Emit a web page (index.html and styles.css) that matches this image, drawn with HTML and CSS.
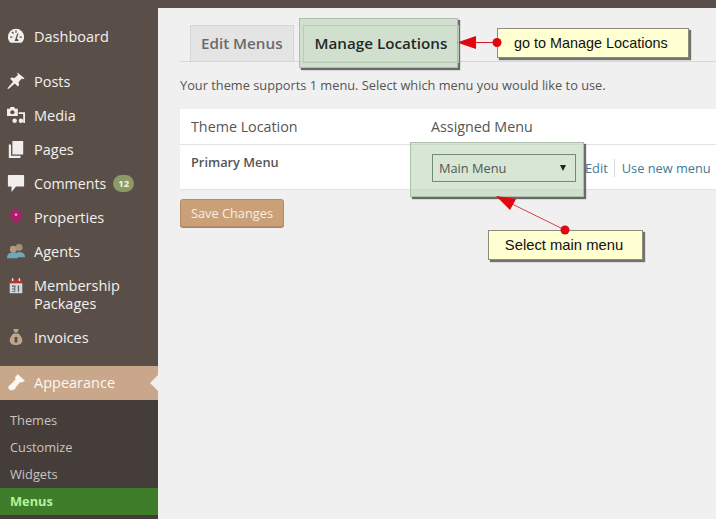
FILE: index.html
```html
<!DOCTYPE html>
<html lang="en">
<head>
  <meta charset="UTF-8">
  <title>Menus</title>
  <link rel="stylesheet" href="styles.css">
</head>
<body>
  <div class="page">
    <div class="sidebar">
      <ul class="menu">
        <li class="item item-dashboard">
          <svg class="icon" viewBox="0 0 20 20"><path fill="#f1eeee" d="M10 2a9 9 0 0 0-9 9c0 2.800 1.200 5 3 6.500h12c1.800-1.500 3-3.700 3-6.500a9 9 0 0 0-9-9z"/><path fill="#594f48" d="M9.300 4h1.400v2.500H9.300zM3.500 10.500H6v1.400H3.500zM14 10.500h2.500v1.400H14zM5 6l1-1 1.800 1.800-1 1zM13 15.500H8.500l3-8.500 1.300.5-1.800 5.200c1 .5 1.700 1.500 2 2.800z"/></svg>
          <span>Dashboard</span>
        </li>
        <li class="item item-posts">
          <svg class="icon" viewBox="0 0 20 20"><path fill="#f1eeee" d="M11.500 0.500l8 6.500-2 1-1-.8-3.600 3.800.6 3.500-1.500 1.500-3.300-3.200-6.700 5.700-1.500.5.500-1.500 5.700-6.700-3.200-3.300 1.500-1.500 3.500.6 3.800-3.600-.8-1z"/></svg>
          <span>Posts</span>
        </li>
        <li class="item">
          <svg class="icon" viewBox="0 0 20 20"><path fill="#f1eeee" d="M0 3h3l1-2h4l1 2h3v8H0zM13 7h7v12h-2V9h-5z"/><circle cx="6" cy="7" r="2.300" fill="#594f48"/><circle cx="8.500" cy="16.500" r="2.500" fill="#f1eeee"/><circle cx="15.500" cy="16.500" r="2.500" fill="#f1eeee"/></svg>
          <span>Media</span>
        </li>
        <li class="item">
          <svg class="icon" viewBox="0 0 20 20"><path fill="#f1eeee" d="M6 1h12v15H6zM2 5h2.500v12.500H15V20H2z"/></svg>
          <span>Pages</span>
        </li>
        <li class="item">
          <svg class="icon" viewBox="0 0 20 20"><path fill="#f1eeee" d="M2 1h16a1 1 0 0 1 1 1v11a1 1 0 0 1-1 1H10l-5 6v-6H2a1 1 0 0 1-1-1V2a1 1 0 0 1 1-1z"/></svg>
          <span class="label-comments">Comments</span>
          <span class="badge">12</span>
        </li>
        <li class="item">
          <svg class="icon" viewBox="0 0 20 20"><path fill="#a81f6b" d="M10 1a6.500 6.500 0 0 1 6.500 6.500C16.500 12 10 18 10 18S3.500 12 3.500 7.500A6.500 6.500 0 0 1 10 1z"/><circle cx="10" cy="7.500" r="1.500" fill="#f09ac8"/></svg>
          <span>Properties</span>
        </li>
        <li class="item">
          <svg class="icon" viewBox="0 0 20 20"><circle cx="7" cy="8" r="3.800" fill="#b59a80"/><circle cx="13.500" cy="6" r="3.800" fill="#a88f78"/><path fill="#6fa8b8" d="M0 18c0-4.500 2.500-6.500 7-6.500 1.300 0 2.500.2 3.300.7.900-.7 2.200-1 3.500-1 3.800 0 6.200 1.800 6.200 5.800h-8v1z"/></svg>
          <span>Agents</span>
        </li>
        <li class="item item-tall">
          <svg class="icon" viewBox="0 0 20 20"><path fill="#b3362f" d="M3 3h14v4H3z"/><path fill="#d7d7d3" d="M3 7h14v11H3z"/><path fill="#4e6a78" d="M5.500 9.500h4v1.200h-4zM8 10.700h1.200v5.800H8zM5.500 12.800h3v1h-3zM5.500 15.500h3v1h-3zM12 9.500h1.500v7H12z"/><path fill="#eee" d="M5.500 1.500h1.500v3H5.500zM13 1.500h1.500v3H13z"/></svg>
          <span>Membership<br>Packages</span>
        </li>
        <li class="item">
          <svg class="icon" viewBox="0 0 20 20"><path fill="#bba68e" d="M7 1h6l-1.500 4.500c3 1.500 5.500 5 5.500 8.500 0 3-2.500 5-7 5s-7-2-7-5c0-3.500 2.500-7 5.500-8.500z"/><path fill="#574a3e" d="M8 5h4v1H8zM8.500 10h3v6h-3z"/></svg>
          <span>Invoices</span>
        </li>
        <li class="item item-current">
          <svg class="icon" viewBox="0 0 20 20"><path fill="#fbf7f2" d="M12 1.500l8 7-3.500 2-1.500-.5-5 5.500c-.5 3-4.500 4.500-7 3s-1.500-5 1.500-6L9.500 7 9 4.500z"/></svg>
          <span>Appearance</span>
        </li>
      </ul>
      <ul class="submenu">
        <li>Themes</li>
        <li>Customize</li>
        <li>Widgets</li>
        <li class="sub-active">Menus</li>
      </ul>
    </div>

    <div class="main">
      <div class="topbar"></div>
      <div class="wrap">
        <div class="tabs">
          <div class="tab">Edit Menus</div>
          <div class="tab tab-active">Manage Locations</div>
        </div>
        <p class="intro">Your theme supports 1 menu. Select which menu you would like to use.</p>
        <div class="table">
          <div class="row row-head">
            <div class="col-name">Theme Location</div>
            <div>Assigned Menu</div>
          </div>
          <div class="row row-body">
            <div class="col-name"><strong>Primary Menu</strong></div>
            <div class="select">
              <span>Main Menu</span>
              <span class="caret"></span>
            </div>
            <div class="links"><a>Edit</a><a>Use new menu</a></div>
          </div>
        </div>
        <button class="save">Save Changes</button>
      </div>
    </div>

    <div class="mark mark-tab"></div>
    <div class="mark mark-select"></div>
    <div class="note note-top">go to Manage Locations</div>
    <div class="note note-bottom">Select main menu</div>
    <svg class="arrows" width="716" height="519" viewBox="0 0 716 519">
      <path d="M475 42.500H497" stroke="#d81820" stroke-width="1" fill="none"/>
      <path d="M457 42.500L476 36V49z" fill="#e2060f"/>
      <circle cx="497" cy="42.500" r="4.500" fill="#e2060f"/>
      <path d="M565 230L510 203" stroke="#d9404a" stroke-width="1" fill="none"/>
      <path d="M496 196L516 199L510 210z" fill="#e2060f"/>
      <circle cx="565" cy="230" r="4.500" fill="#e2060f"/>
    </svg>
  </div>
</body>
</html>
```

FILE: styles.css
```css
* {
  box-sizing: border-box;
}
html, body {
  margin: 0;
  padding: 0;
  height: 100%;
}
body {
  overflow: hidden;
  font-family: "Open Sans", sans-serif;
  background-color: #f0f0f0;
}
ul {
  list-style: none;
  margin: 0;
  padding: 0;
}
.page {
  position: relative;
  display: flex;
  width: 716px;
  height: 519px;
  overflow: hidden;
}
.sidebar {
  width: 158px;
  flex-shrink: 0;
  display: flex;
  flex-direction: column;
  background-color: #594f48;
}
.menu {
  padding-top: 19px;
}
.item {
  display: flex;
  align-items: center;
  height: 34px;
  padding-left: 7px;
  color: #f3f0ee;
  font-size: 14.500px;
}
.item-dashboard {
  margin-bottom: 11px;
}
.item-tall {
  height: 52px;
  line-height: 18px;
  align-items: flex-start;
  padding-top: 9px;
}
.item-current {
  margin-top: 12px;
  padding-bottom: 2px;
  background-color: #c9a78b;
  color: #fbf7f2;
  position: relative;
}
.item-current::after {
  content: "";
  position: absolute;
  right: 0;
  top: 9px;
  border: 8px solid transparent;
  border-right-color: #f0f0f0;
  border-left-width: 0;
}
.icon {
  width: 18px;
  height: 18px;
  margin-right: 9px;
  flex-shrink: 0;
}
.item-tall .icon {
  margin-top: 0;
}
.label-comments {
  font-size: 14.200px;
}
.badge {
  margin-left: 7px;
  padding: 0 5px;
  height: 17px;
  line-height: 17px;
  border-radius: 9px;
  background-color: #8c9a66;
  color: #f4f4e6;
  font-size: 9.500px;
  font-weight: 700;
}
.submenu {
  flex: 1;
  padding-top: 7px;
  background-color: #453d39;
  color: #c9c4c0;
  font-size: 12.800px;
}
.submenu li {
  height: 27px;
  line-height: 27px;
  padding-left: 10px;
}
.submenu .sub-active {
  background-color: #3f7d2a;
  color: #b4f49c;
  font-weight: 700;
}
.main {
  flex: 1;
  min-width: 0;
}
.topbar {
  height: 8px;
  background-color: #594f48;
}
.wrap {
  padding: 17px 0 0 22px;
  width: 558px;
}
.tabs {
  display: flex;
  gap: 9px;
  height: 37px;
  padding-left: 10px;
  border-bottom: 1px solid #d6d6d6;
}
.tab {
  height: 37px;
  padding: 0 10px;
  border: 1px solid #d6d6d6;
  background-color: #e4e4e4;
  color: #6a6a6a;
  font-size: 15.200px;
  font-weight: 600;
  line-height: 34px;
}
.tab-active {
  position: relative;
  z-index: 2;
  height: 38px;
  padding: 0 11px;
  border-color: #b9cbb6;
  background-color: transparent;
  color: #1f2a28;
}
.intro {
  margin: 14px 0 15px;
  color: #555;
  font-size: 12.800px;
  line-height: 18px;
}
.table {
  background-color: #fff;
  box-shadow: 0 1px 1px rgba(0, 0, 0, 0.05);
  width: 540px;
  color: #555;
}
.row {
  display: flex;
  align-items: center;
}
.row-head {
  height: 36px;
  font-size: 14.300px;
  border-bottom: 1px solid #e3e3e3;
}
.row-body {
  height: 44px;
  font-size: 12.800px;
  align-items: flex-start;
  padding-top: 9px;
}
.col-name {
  width: 251px;
  padding-left: 11px;
  flex-shrink: 0;
}
.row-body .col-name {
  line-height: 16px;
}
.col-name strong {
  font-weight: 600;
}
.select {
  position: relative;
  z-index: 2;
  display: flex;
  justify-content: space-between;
  align-items: center;
  width: 144px;
  height: 28px;
  margin: 0 0 0 1px;
  padding: 0 9px 0 6px;
  border: 1px solid #718a72;
  color: #4c5b50;
  font-size: 12.800px;
}
.caret {
  width: 0;
  height: 0;
  border: 3.500px solid transparent;
  border-top: 6px solid #222;
  border-bottom-width: 0;
}
.links {
  display: flex;
  height: 28px;
  align-items: center;
  margin-left: 9px;
  font-size: 12.800px;
  color: #3f7a96;
}
.links a + a {
  margin-left: 6px;
  padding-left: 7px;
  border-left: 1px solid #d8d8d8;
}
.save {
  display: block;
  margin: 10px 0 0;
  width: 104px;
  height: 28px;
  padding: 0;
  background-color: #c9a078;
  border: 1px solid #b58c66;
  border-radius: 3px;
  color: #f7efe6;
  font-family: "Open Sans", sans-serif;
  font-size: 12.800px;
  box-shadow: 0 1px 0 #a98560;
}

/* annotations on top of the screenshot */
.mark {
  position: absolute;
  background-color: rgba(184, 210, 180, 0.55);
  border: 1px solid #aebdac;
  box-shadow: 2px 2px 1px rgba(60, 60, 60, 0.75);
}
.mark-tab {
  left: 299px;
  top: 18px;
  width: 159px;
  height: 50px;
}
.mark-select {
  left: 410px;
  top: 142px;
  width: 174px;
  height: 55px;
}
.arrows {
  position: absolute;
  left: 0;
  top: 0;
}
.note {
  position: absolute;
  background-color: #ffffd2;
  border: 1px solid #8c8c78;
  box-shadow: 2px 2px 1px rgba(60, 60, 60, 0.7);
  color: #111;
  font-family: "Liberation Sans", sans-serif;
  text-align: center;
}
.note-top {
  left: 497px;
  top: 28px;
  width: 192px;
  height: 30px;
  padding-left: 16px;
  font-size: 14.400px;
  line-height: 28px;
  text-align: left;
}
.note-bottom {
  left: 488px;
  top: 230px;
  width: 155px;
  height: 30px;
  padding-right: 3px;
  font-size: 14.800px;
  line-height: 28px;
}
```
